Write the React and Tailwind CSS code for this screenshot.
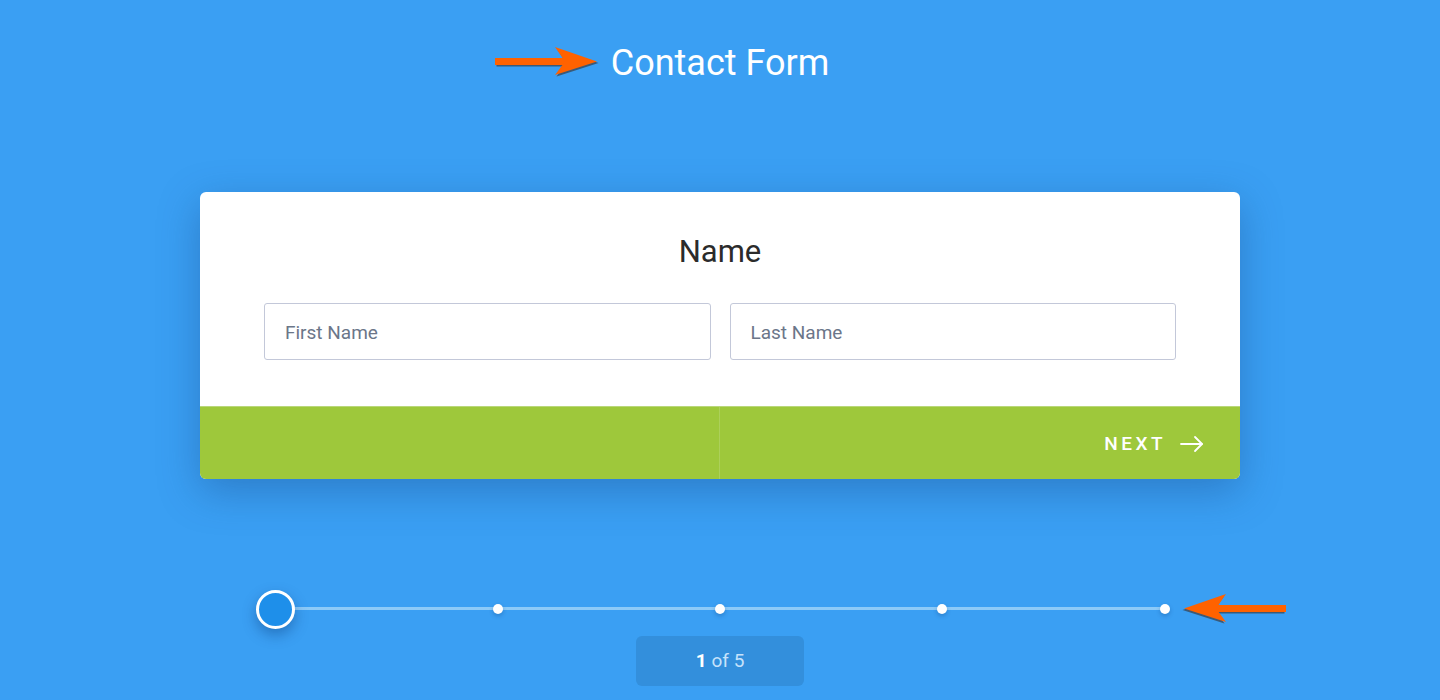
const font = { fontFamily: "Roboto, 'Liberation Sans', sans-serif" }

function OrangeArrow({ dir = "right", className = "" }) {
  // drawn pointing right, flipped for left
  return (
    <svg
      width="104"
      height="32"
      viewBox="0 0 104 32"
      className={`${className} ${dir === "left" ? "-scale-x-100" : ""}`}
    >
      <g transform="translate(1.5 1.5)" fill="#3a4a5a" opacity="0.8">
        <rect x="0" y="12" width="70" height="7" />
        <polygon points="60,1 102,15.5 60,29 70,15.5" />
      </g>
      <g fill="#ff6200">
        <rect x="0" y="12" width="70" height="7" />
        <polygon points="60,1 102,15.5 60,29 70,15.5" />
      </g>
    </svg>
  )
}

export default function App() {
  const steps = [0, 1, 2, 3, 4]

  return (
    <div
      className="min-h-[700px] w-full bg-[#3a9ff3] flex flex-col items-center pt-[42px]"
      style={font}
    >
      {/* title */}
      <div className="relative">
        <h1 className="text-[36px] leading-[42px] text-white font-normal">Contact Form</h1>
        <OrangeArrow className="absolute left-[-116px] top-[4px]" />
      </div>

      {/* card */}
      <div className="mt-[108px] w-[1040px] rounded-md bg-white shadow-[0_12px_40px_rgba(20,60,120,0.35)] overflow-hidden">
        <div className="px-16 pt-[34px] pb-[46px]">
          <h2 className="text-center text-[31px] leading-[52px] text-[#2b2b2b]">Name</h2>
          <div className="mt-[25px] grid grid-cols-2 gap-[19px]">
            <input
              placeholder="First Name"
              className="h-[57px] rounded-[3px] border border-[#c3c8d9] px-5 pt-[2px] text-[19px] text-[#333] placeholder:text-[#6b7689] outline-none"
              style={font}
            />
            <input
              placeholder="Last Name"
              className="h-[57px] rounded-[3px] border border-[#c3c8d9] px-5 pt-[2px] text-[19px] text-[#333] placeholder:text-[#6b7689] outline-none"
              style={font}
            />
          </div>
        </div>
        <div className="grid grid-cols-2 h-[73px] bg-[#9ec83b] border-t border-[#b9d77a]">
          <div className="border-r border-[#acd05a]" />
          <button className="flex items-center justify-end gap-[14px] pr-[36px] pt-[2px] text-white">
            <span className="text-[19px] font-medium tracking-[3.5px]">NEXT</span>
            <svg width="24" height="18" viewBox="0 0 24 18" fill="none" stroke="white" strokeWidth="1.8" strokeLinecap="round" strokeLinejoin="round">
              <path d="M1 9h21" />
              <path d="M15 2l7 7-7 7" />
            </svg>
          </button>
        </div>
      </div>

      {/* progress */}
      <div className="relative mt-[111px] w-[889px] h-[38px]">
        <div className="absolute left-0 right-0 top-[17px] h-[3px] bg-[#8ccaf8]" />
        <div className="relative flex justify-between items-center h-full">
          {steps.map((s) => (
            <div key={s} className="w-0 flex justify-center items-center">
              {s === 0 ? (
                <div className="shrink-0 w-[39px] h-[39px] rounded-full bg-[#1e8fea] border-[3px] border-white shadow-[0_6px_14px_rgba(0,40,100,0.35)]" />
              ) : (
                <div className="shrink-0 w-[10px] h-[10px] rounded-full bg-white shadow-[0_2px_4px_rgba(0,40,100,0.25)]" />
              )}
            </div>
          ))}
        </div>
        <OrangeArrow dir="left" className="absolute left-[906px] top-[3px]" />
      </div>

      <div className="mt-[8px] w-[168px] h-[50px] rounded-md bg-[#338fdc] flex items-center justify-center text-[19px]">
        <span className="font-bold text-white">1</span>
        <span className="ml-[5px] text-[#c6e2fb]">of 5</span>
      </div>
    </div>
  )
}
